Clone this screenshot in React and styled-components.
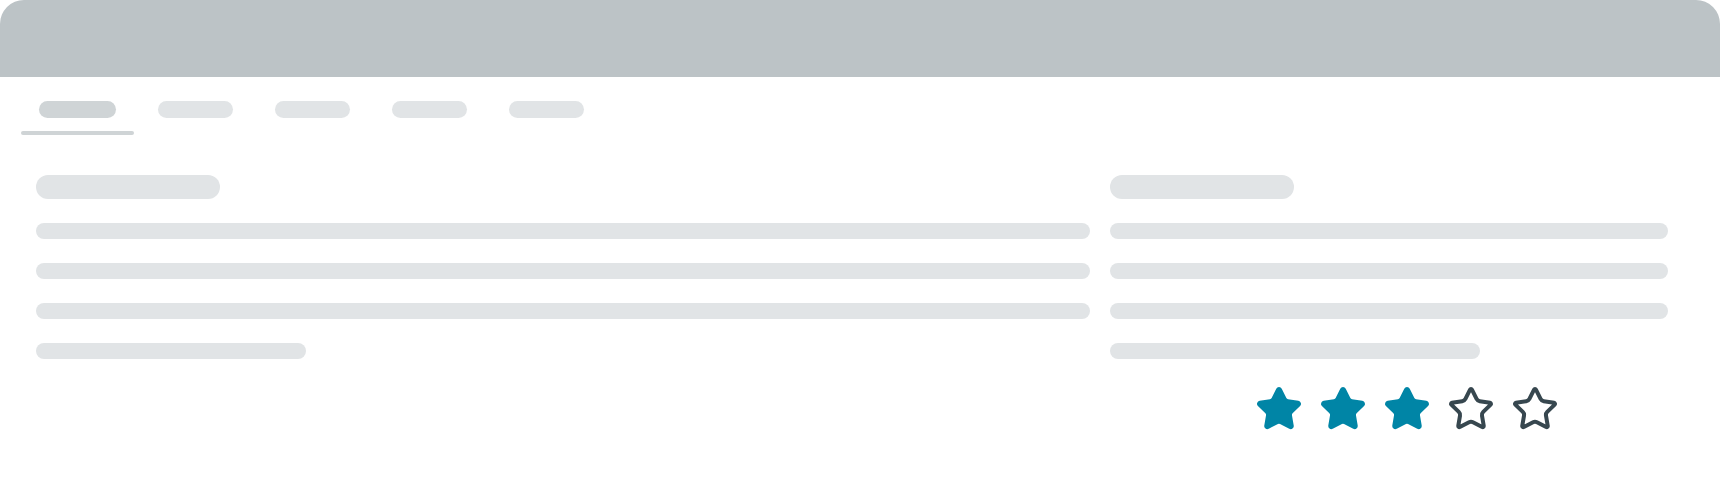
import React from "react";
import styled, { createGlobalStyle } from "styled-components";

const Global = createGlobalStyle`
  html, body { margin: 0; padding: 0; background: #ffffff; }
  body { font-family: "Liberation Sans", Arial, sans-serif; }
`;

const Page = styled.div`
  width: 1720px;
  height: 504px;
  background: #ffffff;
  overflow: hidden;
`;

const TopBar = styled.header`
  height: 77px;
  background: #bcc3c6;
  border-radius: 24px 24px 0 0;
`;

const Tabs = styled.nav`
  display: flex;
  gap: 6px;
  padding: 24px 0 0 21px;
`;

const Tab = styled.div`
  display: flex;
  flex-direction: column;
  align-items: stretch;
  gap: 13px;
`;

const TabLabel = styled.div`
  height: 17px;
  width: ${(p) => p.$w}px;
  margin: 0 18px;
  border-radius: 9px;
  background: ${(p) => (p.$active ? "#cfd4d6" : "#e1e4e6")};
`;

const TabLine = styled.div`
  height: 4px;
  border-radius: 2px;
  background: ${(p) => (p.$active ? "#cfd4d6" : "transparent")};
`;

const Content = styled.main`
  display: grid;
  grid-template-columns: 1fr 558px;
  column-gap: 20px;
  padding: 40px 52px 0 36px;
`;

const Column = styled.section`
  display: flex;
  flex-direction: column;
  gap: 24px;
`;

const Heading = styled.div`
  height: 24px;
  width: 184px;
  border-radius: 12px;
  background: #e1e4e6;
`;

const Line = styled.div`
  height: 16px;
  width: ${(p) => p.$w || "100%"};
  border-radius: 8px;
  background: #e1e4e6;
`;

const Stars = styled.div`
  display: flex;
  gap: 16px;
  margin-top: 2px;
  margin-left: 145px;
`;

const Star = ({ filled }) => (
  <svg
    width="48"
    height="48"
    viewBox="0 0 24 24"
    fill={filled ? "#0085a6" : "none"}
    stroke={filled ? "#0085a6" : "#37474f"}
    strokeWidth="2"
    strokeLinecap="round"
    strokeLinejoin="round"
  >
    <path d="M11.525 2.295a.53.53 0 0 1 .95 0l2.31 4.679a2.123 2.123 0 0 0 1.595 1.16l5.166.756a.53.53 0 0 1 .294.904l-3.736 3.638a2.123 2.123 0 0 0-.611 1.878l.882 5.14a.53.53 0 0 1-.771.56l-4.618-2.428a2.122 2.122 0 0 0-1.973 0L6.396 21.01a.53.53 0 0 1-.77-.56l.881-5.139a2.122 2.122 0 0 0-.611-1.879L2.16 9.795a.53.53 0 0 1 .294-.906l5.165-.755a2.122 2.122 0 0 0 1.597-1.16z" />
  </svg>
);

const tabs = [77, 75, 75, 75, 75];

export default function App() {
  return (
    <Page>
      <Global />
      <TopBar />
      <Tabs>
        {tabs.map((w, i) => (
          <Tab key={i}>
            <TabLabel $w={w} $active={i === 0} />
            <TabLine $active={i === 0} />
          </Tab>
        ))}
      </Tabs>
      <Content>
        <Column>
          <Heading />
          <Line />
          <Line />
          <Line />
          <Line $w="270px" />
        </Column>
        <Column>
          <Heading />
          <Line />
          <Line />
          <Line />
          <Line $w="370px" />
          <Stars>
            {[1, 1, 1, 0, 0].map((f, i) => (
              <Star key={i} filled={!!f} />
            ))}
          </Stars>
        </Column>
      </Content>
    </Page>
  );
}
